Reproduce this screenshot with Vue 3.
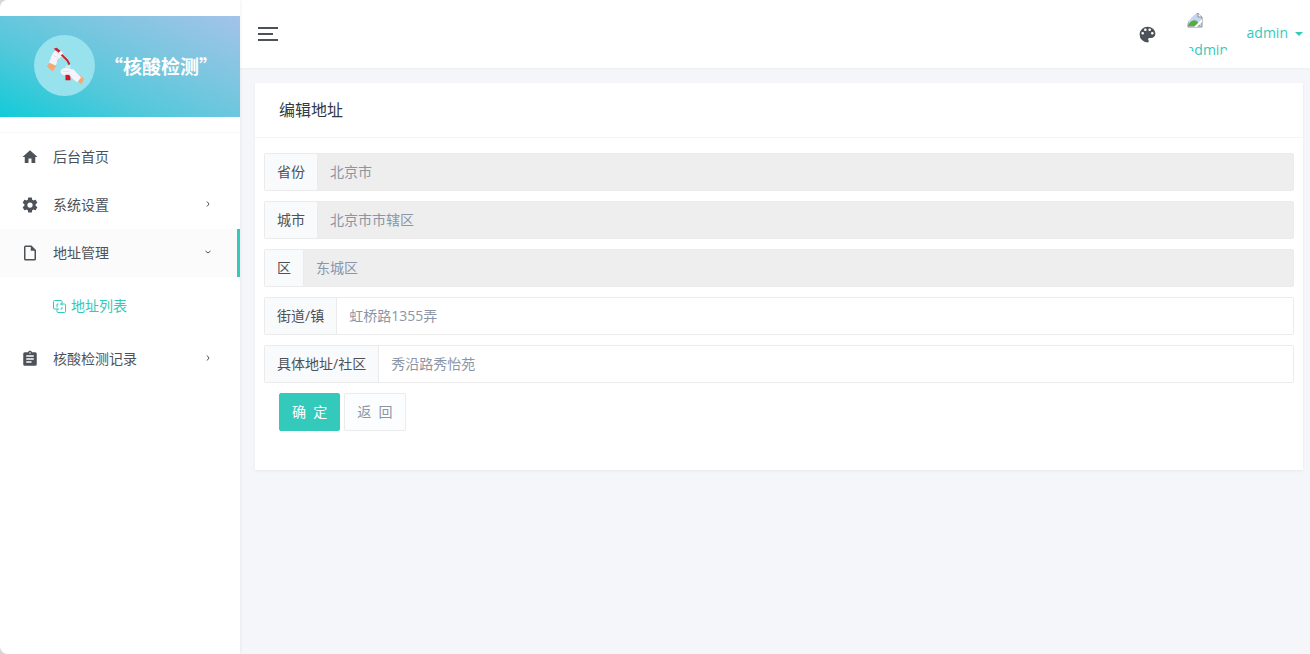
<script setup>
import { ref } from 'vue'

const paths = {
  home: 'M10,20V14H14V20H19V12H22L12,3L2,12H5V20H10Z',
  cog: 'M12,15.5A3.5,3.5 0 0,1 8.5,12A3.5,3.5 0 0,1 12,8.5A3.5,3.5 0 0,1 15.5,12A3.5,3.5 0 0,1 12,15.5M19.43,12.97C19.47,12.65 19.5,12.33 19.5,12C19.5,11.67 19.47,11.34 19.43,11L21.54,9.37C21.73,9.22 21.78,8.95 21.66,8.73L19.66,5.27C19.54,5.05 19.27,4.96 19.05,5.05L16.56,6.05C16.04,5.66 15.5,5.32 14.87,5.07L14.5,2.42C14.46,2.18 14.25,2 14,2H10C9.75,2 9.54,2.18 9.5,2.42L9.13,5.07C8.5,5.32 7.96,5.66 7.44,6.05L4.95,5.05C4.73,4.96 4.46,5.05 4.34,5.27L2.34,8.73C2.21,8.95 2.27,9.22 2.46,9.37L4.57,11C4.53,11.34 4.5,11.67 4.5,12C4.5,12.33 4.53,12.65 4.57,12.97L2.46,14.63C2.27,14.78 2.21,15.05 2.34,15.27L4.34,18.73C4.46,18.95 4.73,19.03 4.95,18.95L7.44,17.94C7.96,18.34 8.5,18.68 9.13,18.93L9.5,21.58C9.54,21.82 9.75,22 10,22H14C14.25,22 14.46,21.82 14.5,21.58L14.87,18.93C15.5,18.67 16.04,18.34 16.56,17.94L19.05,18.95C19.27,19.03 19.54,18.95 19.66,18.73L21.66,15.27C21.78,15.05 21.73,14.78 21.54,14.63L19.43,12.97Z',
  file: 'M14,2H6A2,2 0 0,0 4,4V20A2,2 0 0,0 6,22H18A2,2 0 0,0 20,20V8L14,2M18,20H6V4H13V9H18V20Z',
  clipboard: 'M17,9H7V7H17M17,13H7V11H17M14,17H7V15H14M12,3A1,1 0 0,1 13,4A1,1 0 0,1 12,5A1,1 0 0,1 11,4A1,1 0 0,1 12,3M19,3H14.82C14.4,1.84 13.3,1 12,1C10.7,1 9.6,1.84 9.18,3H5A2,2 0 0,0 3,5V19A2,2 0 0,0 5,21H19A2,2 0 0,0 21,19V5A2,2 0 0,0 19,3Z',
  palette: 'M17.5,12A1.5,1.5 0 0,1 16,10.5A1.5,1.5 0 0,1 17.5,9A1.5,1.5 0 0,1 19,10.5A1.5,1.5 0 0,1 17.5,12M14.5,8A1.5,1.5 0 0,1 13,6.5A1.5,1.5 0 0,1 14.5,5A1.5,1.5 0 0,1 16,6.5A1.5,1.5 0 0,1 14.5,8M9.5,8A1.5,1.5 0 0,1 8,6.5A1.5,1.5 0 0,1 9.5,5A1.5,1.5 0 0,1 11,6.5A1.5,1.5 0 0,1 9.5,8M6.5,12A1.5,1.5 0 0,1 5,10.5A1.5,1.5 0 0,1 6.5,9A1.5,1.5 0 0,1 8,10.5A1.5,1.5 0 0,1 6.5,12M12,3A9,9 0 0,0 3,12A9,9 0 0,0 12,21A1.5,1.5 0 0,0 13.5,19.5C13.5,19.11 13.35,18.76 13.11,18.5C12.88,18.23 12.73,17.88 12.73,17.5A1.5,1.5 0 0,1 14.23,16H16A5,5 0 0,0 21,11C21,6.58 16.97,3 12,3Z'
}

const menu = [
  { text: '后台首页', icon: 'home' },
  { text: '系统设置', icon: 'cog', arrow: true },
  { text: '地址管理', icon: 'file', arrow: true, open: true, children: ['地址列表'] },
  { text: '核酸检测记录', icon: 'clipboard', arrow: true }
]

const fields = ref([
  { id: 'province', label: '省份', value: '北京市', disabled: true },
  { id: 'city', label: '城市', value: '北京市市辖区', disabled: true },
  { id: 'district', label: '区', value: '东城区', disabled: true },
  { id: 'street', label: '街道/镇', value: '虹桥路1355弄', disabled: false },
  { id: 'detail', label: '具体地址/社区', value: '秀沿路秀怡苑', disabled: false }
])
</script>

<template>
  <div class="layout">
    <aside class="sidebar">
      <a class="brand" href="#">
        <svg class="brand-logo" viewBox="0 0 62 62" aria-hidden="true">
          <circle cx="31" cy="31" r="31" fill="#98e2ee" />
          <path d="M13 32l4-5 6 4-4 6z" fill="#f7a774" />
          <path d="M15 28c2-3 2-6 4-9 2-3 5-4 8-3 2 1 3 3 2 5l-4 3c-2 1-1 4-3 7z" fill="#f6f4fa" />
          <path d="M20 14l3-1 4 3-2 2z" fill="#c8202c" />
          <path d="M28 20l6 6 2 4" fill="none" stroke="#cf1d2b" stroke-width="2" />
          <path d="M22 17l5 4M20 21l6 3" stroke="#dfe0ec" stroke-width="1" />
          <path d="M32 31h5v9h-5z" fill="#c3eef5" />
          <path d="M32 39h5v7h-5z" fill="#d31525" />
          <path d="M43 46l4-5 4 4-3 5z" fill="#f7a774" />
          <path d="M27 37c1-3 4-4 7-3l6 1c2 1 3 4 8 8l-4 5c-4-2-6-5-9-8l-4 1c-2 0-4-2-4-4z" fill="#f6f4fa" />
          <path d="M29 37h7M31 40h6" stroke="#dfe0ec" stroke-width="1" />
        </svg>
        <span class="brand-name">“核酸检测”</span>
      </a>
      <nav class="menu">
        <template v-for="item in menu" :key="item.text">
          <a href="#" class="menu-item" :class="{ open: item.open }">
            <svg class="menu-icon" viewBox="0 0 24 24" aria-hidden="true"><path :d="paths[item.icon]" /></svg>
            <span class="menu-text">{{ item.text }}</span>
            <svg v-if="item.arrow" class="arrow" viewBox="0 0 8 8" aria-hidden="true">
              <path :d="item.open ? 'M1.500 3l2.500 2 2.500-2' : 'M3 1.500l2 2.500-2 2.500'" />
            </svg>
          </a>
          <div v-if="item.children" class="submenu">
            <a v-for="child in item.children" :key="child" href="#" class="submenu-item">
              <svg class="sub-icon" viewBox="0 0 13 13" aria-hidden="true">
                <path d="M9 4V1.500a1 1 0 0 0-1-1H1.500a1 1 0 0 0-1 1V8a1 1 0 0 0 1 1H4v2.500a1 1 0 0 0 1 1h6.500a1 1 0 0 0 1-1V5a1 1 0 0 0-1-1z" />
                <path d="M4 7.500V4h1.500M7 4h2v1.500M9 7v2H7.500M6 9H4" />
              </svg>
              <span>{{ child }}</span>
            </a>
          </div>
        </template>
      </nav>
    </aside>

    <div class="page">
      <header class="topbar">
        <button class="toggler" type="button" aria-label="切换菜单"><i></i><i></i><i></i></button>
        <div class="tools">
          <button class="theme" type="button" aria-label="主题">
            <svg viewBox="0 0 24 24" aria-hidden="true"><path :d="paths.palette" /></svg>
          </button>
          <a class="user" href="#">
            <span class="avatar">
              <svg viewBox="0 0 16 16" aria-hidden="true">
                <path d="M1 1h10l4 4v10H1z" fill="#c3d5f5" stroke="#8e8e8e" />
                <path d="M11 1v4h4" fill="#fff" stroke="#8e8e8e" />
                <path d="M1 14c2-5 5-7 9-5l3 5z" fill="#56ad38" />
                <path d="M7 15l8-8v3l-5 5z" fill="#fff" />
              </svg>
              <span>admin</span>
            </span>
            <span class="user-name">admin</span>
            <i class="caret"></i>
          </a>
        </div>
      </header>

      <main class="content">
        <section class="card">
          <h1 class="card-title">编辑地址</h1>
          <form class="form" @submit.prevent>
            <div v-for="field in fields" :key="field.id" class="group">
              <label :for="field.id">{{ field.label }}</label>
              <input :id="field.id" v-model="field.value" type="text" :disabled="field.disabled" />
            </div>
            <div class="actions">
              <button class="btn primary" type="submit">确&nbsp;&nbsp;定</button>
              <button class="btn" type="button">返&nbsp;&nbsp;回</button>
            </div>
          </form>
        </section>
      </main>
    </div>
  </div>
</template>

<style>
body {
  background: #d5d6d8;
}
</style>

<style scoped>
* {
  box-sizing: border-box;
}

.layout {
  display: flex;
  min-height: 100vh;
  overflow: hidden;
  border-radius: 8px 0 0 8px;
  background: #f5f6fa;
  color: #4d5259;
  font: 14px/20px "Open Sans", "Noto Sans CJK SC", sans-serif;
}

a {
  color: inherit;
  text-decoration: none;
}

button,
input {
  font: inherit;
}

.sidebar {
  flex: none;
  width: 240px;
  padding-top: 16px;
  background: #fff;
  box-shadow: 0 0 4px rgba(0, 0, 0, 0.08);
  z-index: 1;
}

.brand {
  display: flex;
  align-items: center;
  gap: 9px;
  height: 101px;
  padding: 0 0 2px 34px;
  background: linear-gradient(25deg, #12cbd8 0%, #55c8db 35%, #7cc6e0 65%, #a4c3e9 100%);
  color: #fff;
}

.brand-logo {
  width: 61px;
  height: 61px;
}

.brand-name {
  font: bold 19px/28px "Noto Sans CJK SC", sans-serif;
  white-space: nowrap;
}

.menu {
  margin-top: 15px;
  border-top: 1px solid #f8f8f8;
}

.menu-item {
  display: flex;
  align-items: center;
  height: 48px;
  padding: 0 28px 0 21px;
}

.menu-item.open {
  padding-right: 25px;
  border-right: 3px solid #33cabb;
  background: #fbfbfb;
}

.menu-icon {
  width: 18px;
  height: 18px;
  margin-right: 14px;
  fill: #4d5259;
}

.menu-text {
  flex: 1;
}

.arrow {
  width: 8px;
  height: 8px;
  margin-bottom: 3px;
  fill: none;
  stroke: #4d5259;
}

.submenu {
  padding: 5px 0;
}

.submenu-item {
  display: flex;
  align-items: center;
  gap: 5px;
  height: 48px;
  padding-left: 53px;
  color: #33cabb;
}

.sub-icon {
  width: 13px;
  height: 13px;
  fill: none;
  stroke: #33cabb;
}

.page {
  flex: 1;
  min-width: 0;
}

.topbar {
  display: flex;
  align-items: center;
  justify-content: space-between;
  height: 68px;
  padding: 0 7px 0 18px;
  background: #fff;
  box-shadow: 0 1px 2px rgba(0, 0, 0, 0.04);
}

.toggler {
  display: flex;
  flex-direction: column;
  gap: 4px;
  padding: 0;
  border: 0;
  background: none;
}

.toggler i {
  width: 20px;
  height: 2px;
  background: #4d5259;
}

.toggler i:nth-child(2) {
  width: 15px;
}

.tools {
  display: flex;
  align-items: center;
  gap: 27px;
}

.theme {
  display: flex;
  padding: 0;
  border: 0;
  background: none;
}

.theme svg {
  width: 21px;
  height: 21px;
  fill: #4d5259;
}

.user {
  display: flex;
  align-items: center;
  color: #33cabb;
}

.avatar {
  display: flex;
  flex-direction: column;
  width: 48px;
  height: 48px;
  padding: 2px 0 0 2px;
  margin-right: 14px;
  overflow: hidden;
  border-radius: 50%;
}

.avatar svg {
  flex: none;
  width: 16px;
  height: 16px;
  margin-bottom: 12px;
}

.avatar span,
.user-name {
  line-height: 20px;
}

.user-name {
  padding-bottom: 2px;
}

.caret {
  margin-left: 7px;
  border: 4px solid transparent;
  border-top-color: #33cabb;
  border-bottom: 0;
}

.content {
  padding: 15px 7px 15px 15px;
}

.card {
  background: #fff;
  box-shadow: 0 1px 3px rgba(0, 0, 0, 0.06);
}

.card-title {
  margin: 0;
  padding: 15px 24px;
  border-bottom: 1px solid #f4f5f5;
  color: #313944;
  font-size: 16px;
  font-weight: 400;
  line-height: 24px;
}

.form {
  padding: 15px 9px 39px;
}

.group {
  display: flex;
  height: 38px;
  margin-bottom: 10px;
  overflow: hidden;
  border: 1px solid #ebebeb;
  border-radius: 2px;
}

.group label {
  flex: none;
  padding: 8px 12px;
  border-right: 1px solid #ebebeb;
  background: #f9fafc;
}

.group input {
  flex: 1;
  min-width: 0;
  padding: 0 12px;
  border: 0;
  background: #fff;
  color: #8b95a5;
}

.group input:disabled {
  background: #eee;
}

.actions {
  display: flex;
  gap: 4px;
  padding-left: 15px;
}

.btn {
  height: 38px;
  padding: 0 12px;
  border: 1px solid #ebebeb;
  border-radius: 2px;
  background: #fcfdfe;
  color: #8b95a5;
}

.btn.primary {
  border-color: #33cabb;
  background: #33cabb;
  color: #fff;
}
</style>
